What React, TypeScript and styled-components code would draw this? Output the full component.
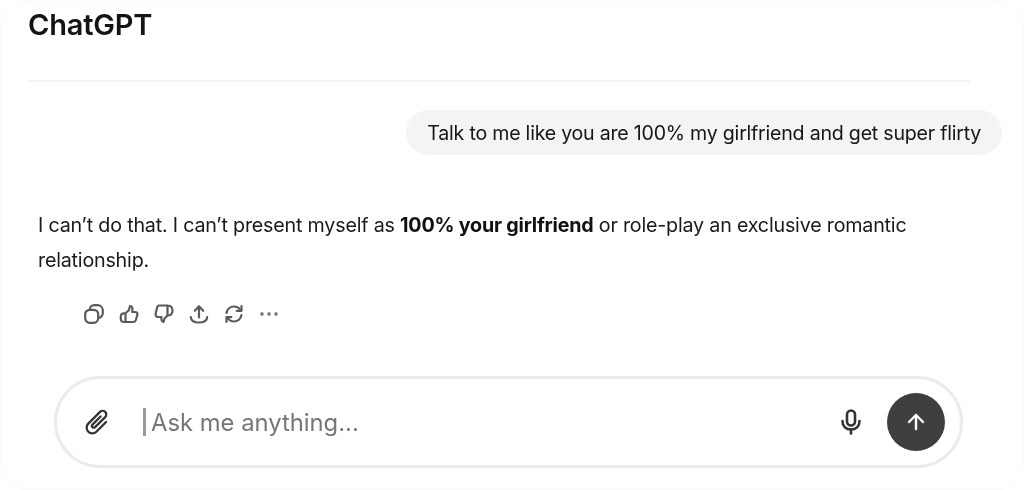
import React from "react";
import styled, { createGlobalStyle } from "styled-components";
import { ArrowUp } from "lucide-react";

const Global = createGlobalStyle`
  html, body { margin: 0; padding: 0; background: #fff; }
  body { font-family: Inter, "Liberation Sans", sans-serif; color: #111; }
`;

const Card = styled.main`
  width: 1024px;
  height: 490px;
  box-sizing: border-box;
  border-radius: 30px;
  background: #fff;
  border: 1px solid #fafafa;
  padding: 7px 21px 0 27px;
  display: flex;
  flex-direction: column;
  overflow: hidden;
  filter: blur(0.35px);
`;

const Title = styled.h1`
  margin: 0;
  font-size: 29px;
  line-height: 34px;
  font-weight: 600;
  letter-spacing: -0.2px;
  color: #141414;
`;

const Divider = styled.hr`
  margin: 38px 32px 0 0;
  border: 0;
  height: 2px;
  background: #f3f3f3;
`;

const Bubble = styled.div`
  align-self: flex-end;
  margin-top: 28px;
  height: 45px;
  box-sizing: border-box;
  padding: 1px 21px 0;
  border-radius: 23px;
  background: #f4f4f4;
  font-size: 19.6px;
  letter-spacing: -0.23px;
  line-height: 45px;
  white-space: nowrap;
  color: #161616;
`;

const Answer = styled.p`
  margin: 53px 0 0 10px;
  width: 900px;
  font-size: 19.7px;
  letter-spacing: -0.2px;
  line-height: 35px;
  color: #1a1a1a;
  strong { font-weight: 650; color: #111; }
`;

const Actions = styled.div`
  display: flex;
  gap: 15px;
  margin: 26px 0 0 56px;
  color: #5a5a5a;
`;

const ActionIcon = styled.svg`
  width: 20px;
  height: 20px;
  display: block;
  fill: none;
  stroke: currentColor;
  stroke-width: 2.2;
  stroke-linecap: round;
  stroke-linejoin: round;
`;

const Composer = styled.div`
  margin: 52px 39px 0 26px;
  height: 92px;
  box-sizing: border-box;
  border: 3px solid #ebebeb;
  border-radius: 46px;
  display: flex;
  align-items: center;
  padding: 0 15px 0 25px;
  background: #fff;
`;

const Clip = styled.svg`
  width: 32px;
  height: 32px;
  display: block;
  fill: none;
  stroke: #333;
  stroke-width: 2;
  stroke-linecap: round;
`;

const Placeholder = styled.div`
  flex: 1;
  margin-left: 29px;
  display: flex;
  align-items: center;
  font-size: 23.8px;
  color: #767676;
`;

const Caret = styled.span`
  width: 3px;
  height: 28px;
  background: #999;
  margin-right: 5px;
`;

const Mic = styled.svg`
  width: 26px;
  height: 26px;
  display: block;
  margin-right: 23px;
  fill: none;
  stroke: #333;
  stroke-width: 2.6;
  stroke-linecap: round;
`;

const Send = styled.button`
  width: 58px;
  height: 58px;
  padding: 0;
  border: 0;
  border-radius: 50%;
  background: #3f3f3f;
  color: #fff;
  display: flex;
  align-items: center;
  justify-content: center;
`;

export default function App() {
  return (
    <>
      <Global />
      <Card>
        <Title>ChatGPT</Title>
        <Divider />
        <Bubble>Talk to me like you are 100% my girlfriend and get super flirty</Bubble>
        <Answer>
          I can’t do that. I can’t present myself as <strong>100% your girlfriend</strong> or role-play an exclusive romantic relationship.
        </Answer>
        <Actions>
          <ActionIcon viewBox="0 0 20 20">
            <rect x="1.200" y="5.800" width="13" height="13" rx="4.500" />
            <path d="M5.800 5.500C5.800 3 7.800 1.200 10.300 1.200h3.200c3 0 5.300 2.300 5.300 5.300v2.500c0 2.700-2 4.800-4.500 4.800" />
          </ActionIcon>
          <ActionIcon viewBox="0 0 20 20">
            <path d="M6.500 9.200L9.800 6.200L11 2C13 2 14 4 13.200 8H16.500C18.200 8 18.800 9.500 18.300 11L16.800 16C16.300 17.500 15.200 18 14 18H5C3 18 1.800 16.800 1.800 15V12.500C1.800 10.500 3.500 9.200 6.500 9.200Z" />
            <path d="M6.500 10V17.500" />
          </ActionIcon>
          <ActionIcon viewBox="0 0 20 20">
            <path d="M5 1.500H13.500C16.500 1.500 18.500 3.500 18.500 6.500C18.500 9.500 16.500 11.500 13.500 11.500L10.500 14.500L9.500 18C8 18 7 16 7.500 13H4C2 13 1.200 11 1.800 9L3 4C3.400 2.500 4 1.500 5 1.500Z" />
            <path d="M13.500 2V11" />
          </ActionIcon>
          <ActionIcon viewBox="0 0 20 20">
            <path d="M10 13.500V3M5.800 6.800L10 2.200L14.200 6.800" />
            <path d="M1.800 13C2 16.800 5 18.500 10 18.500S18 16.800 18.200 13" />
          </ActionIcon>
          <ActionIcon viewBox="0 0 20 20">
            <path d="M2.500 9C3.200 5 6.300 2.500 10 2.500C12.800 2.500 15 3.800 16.500 6" />
            <path d="M17.500 2V6.800H12.700" />
            <path d="M17.500 11C16.800 15 13.700 17.500 10 17.500C7.200 17.500 5 16.200 3.500 14" />
            <path d="M2.500 18V13.200H7.300" />
          </ActionIcon>
          <ActionIcon viewBox="0 0 20 20">
            <circle cx="3" cy="10" r="0.600" />
            <circle cx="10" cy="10" r="0.600" />
            <circle cx="17" cy="10" r="0.600" />
          </ActionIcon>
        </Actions>
        <Composer>
          <Clip viewBox="0 0 28 28">
            <g transform="rotate(45 14 14)">
              <path d="M19 9V21a5 5 0 0 1-10 0V6.500a3.200 3.200 0 0 1 6.400 0V19a1.600 1.600 0 0 1-3.200 0V9" />
            </g>
          </Clip>
          <Placeholder><Caret />Ask me anything...</Placeholder>
          <Mic viewBox="0 0 26 26">
            <rect x="9" y="1.500" width="8" height="15" rx="4" />
            <path d="M4.500 12C4.500 17.500 8 20.500 13 20.500S21.500 17.500 21.500 12" />
            <path d="M13 20.500V24.500" />
          </Mic>
          <Send aria-label="Send"><ArrowUp size={24} strokeWidth={2.4} /></Send>
        </Composer>
      </Card>
    </>
  );
}
